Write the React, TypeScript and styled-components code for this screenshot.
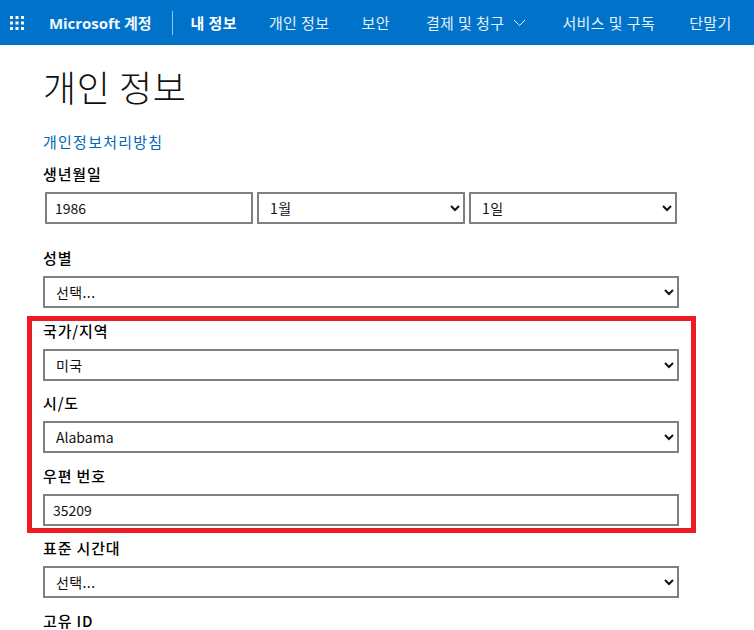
import React from 'react';
import styled, { createGlobalStyle } from 'styled-components';

const GlobalStyle = createGlobalStyle`
  html, body {
    margin: 0;
    padding: 0;
    background: #fff;
    overflow: hidden;
  }
  body {
    font-family: "Noto Sans CJK KR", "Noto Sans", "Open Sans", sans-serif;
    color: #000;
  }
`;

const Page = styled.div`
  position: relative;
  width: 754px;
  height: 630px;
  overflow: hidden;
`;

const Header = styled.header`
  display: flex;
  align-items: center;
  height: 45px;
  background: #0072c9;
  color: #fff;
  font-size: 15px;
  letter-spacing: 0.4px;
`;

const Waffle = styled.svg`
  flex: none;
  width: 16px;
  height: 16px;
  margin: 0 24px 0 9px;
  fill: #fff;
`;

const Brand = styled.span`
  font-family: "Open Sans", "Noto Sans CJK KR", sans-serif;
  font-size: 15px;
  font-weight: 700;
  letter-spacing: -0.05px;
  white-space: nowrap;
  opacity: 0.95;
`;

const Divider = styled.span`
  flex: none;
  width: 1px;
  height: 24px;
  margin: 0 18px 0 20px;
  background: #9cc6e8;
`;

const Nav = styled.nav`
  display: flex;
  align-items: center;
`;

const NavItem = styled.a<{ $active?: boolean; $gap: number }>`
  display: inline-flex;
  align-items: center;
  gap: 9px;
  margin-right: ${(p) => p.$gap}px;
  font-weight: ${(p) => (p.$active ? 700 : 400)};
  white-space: nowrap;
  color: #fff;
  opacity: ${(p) => (p.$active ? 1 : 0.9)};
`;

const Content = styled.main`
  padding: 0 75px 0 43px;
`;

const Title = styled.h1`
  margin: 0;
  padding-top: 17px;
  height: 48px;
  font-size: 36px;
  font-weight: 200;
  letter-spacing: 0.6px;
  line-height: 48px;
  color: #111;
`;

const PolicyLink = styled.a`
  display: block;
  margin-top: 20.5px;
  height: 21px;
  font-size: 15px;
  letter-spacing: 1.25px;
  line-height: 21px;
  color: #0067b8;
`;

const Group = styled.div<{ $extra?: number }>`
  display: flex;
  flex-direction: column;
  height: 72.5px;
  margin-bottom: ${(p) => p.$extra ?? 0}px;
`;

const Label = styled.label`
  display: block;
  height: 22px;
  margin-top: 11.5px;
  margin-bottom: 7px;
  font-size: 15px;
  font-weight: 500;
  letter-spacing: 0.85px;
  line-height: 22px;
  color: #000;
`;

const BirthRow = styled.div`
  display: flex;
  gap: 4px;
  padding: 0 2px;
`;

const fieldCss = `
  box-sizing: border-box;
  display: block;
  height: 32px;
  border: 2px solid #808080;
  border-radius: 0;
  background: #fff;
  color: #111;
  font-family: "Noto Sans CJK KR", "Noto Sans", sans-serif;
  font-size: 14px;
  outline: none;
`;

const TextInput = styled.input<{ $width?: number }>`
  ${fieldCss}
  width: ${(p) => (p.$width ? `${p.$width}px` : '100%')};
  padding: 0 8px;
`;

const Select = styled.select<{ $width?: number; $hangul?: boolean }>`
  ${fieldCss}
  width: ${(p) => (p.$width ? `${p.$width}px` : '100%')};
  padding: 0 7px;
  letter-spacing: ${(p) => (p.$hangul ? '0.4px' : '0')};
`;

const Highlight = styled.div`
  position: absolute;
  box-sizing: border-box;
  left: 27px;
  top: 316px;
  width: 669px;
  height: 217px;
  border: 5px solid #ed1c24;
  pointer-events: none;
`;

const dots = [1, 6.5, 12];

const App: React.FC = () => {
  return (
    <Page>
      <GlobalStyle />
      <Header>
        <Waffle viewBox="0 0 16 16">
          {dots.map((y) =>
            dots.map((x) => <rect key={`${x}-${y}`} x={x} y={y} width="3" height="3" />)
          )}
        </Waffle>
        <Brand>Microsoft 계정</Brand>
        <Divider />
        <Nav>
          <NavItem $active $gap={32}>내 정보</NavItem>
          <NavItem $gap={32}>개인 정보</NavItem>
          <NavItem $gap={36}>보안</NavItem>
          <NavItem $gap={36}>
            결제 및 청구
            <svg width="13" height="8" viewBox="0 0 13 8" fill="none" stroke="#fff" strokeWidth="1">
              <path d="M1 1l5.5 5.5L12 1" />
            </svg>
          </NavItem>
          <NavItem $gap={34}>서비스 및 구독</NavItem>
          <NavItem $gap={0}>단말기</NavItem>
        </Nav>
      </Header>
      <Content>
        <Title>개인 정보</Title>
        <PolicyLink>개인정보처리방침</PolicyLink>
        <Group $extra={11.5}>
          <Label>생년월일</Label>
          <BirthRow>
            <TextInput $width={208} defaultValue="1986" />
            <Select $hangul $width={208} defaultValue="1월">
              <option>1월</option>
            </Select>
            <Select $hangul $width={208} defaultValue="1일">
              <option>1일</option>
            </Select>
          </BirthRow>
        </Group>
        <Group>
          <Label>성별</Label>
          <Select $hangul defaultValue="선택...">
            <option>선택...</option>
          </Select>
        </Group>
        <Group>
          <Label>국가/지역</Label>
          <Select $hangul defaultValue="미국">
            <option>미국</option>
          </Select>
        </Group>
        <Group>
          <Label>시/도</Label>
          <Select defaultValue="Alabama">
            <option>Alabama</option>
          </Select>
        </Group>
        <Group>
          <Label>우편 번호</Label>
          <TextInput defaultValue="35209" />
        </Group>
        <Group>
          <Label>표준 시간대</Label>
          <Select $hangul defaultValue="선택...">
            <option>선택...</option>
          </Select>
        </Group>
        <Group>
          <Label>고유 ID</Label>
        </Group>
      </Content>
      <Highlight />
    </Page>
  );
};

export default App;
